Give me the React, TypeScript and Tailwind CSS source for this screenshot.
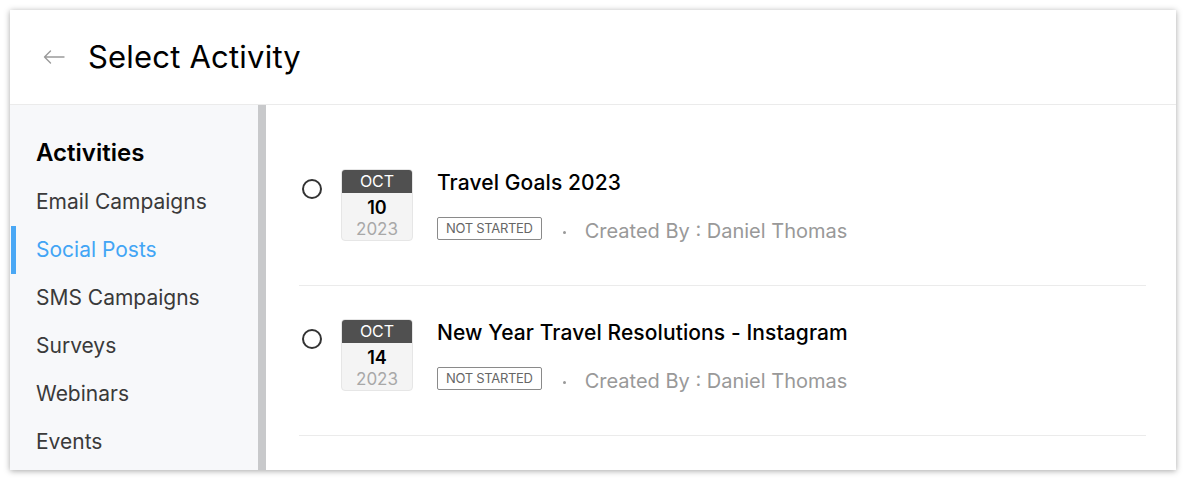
import React from "react";

const items = ["Email Campaigns", "Social Posts", "SMS Campaigns", "Surveys", "Webinars", "Events"];

const rows = [
  { month: "OCT", day: "10", year: "2023", title: "Travel Goals 2023" },
  { month: "OCT", day: "14", year: "2023", title: "New Year Travel Resolutions - Instagram" },
];

export default function App() {
  return (
    <div className="w-[1186px] h-[480px] bg-white pt-[10px] pl-[10px]" style={{ fontFamily: "Inter, 'Noto Sans', sans-serif" }}>
      <div className="w-[1166px] h-[460px] bg-white flex flex-col shadow-[0_1px_6px_rgba(0,0,0,0.35)] overflow-hidden">
        <div className="h-[95px] border-b border-[#ebebeb] flex items-center shrink-0">
          <svg className="ml-[32px]" width="24" height="16" viewBox="0 0 24 16" fill="none" stroke="#9a9a9a" strokeWidth="1.4">
            <path d="M22 8H2.5M8.5 2L2.5 8l6 6" strokeLinecap="round" strokeLinejoin="round" />
          </svg>
          <div className="ml-[22px] text-[31px] text-black leading-none tracking-[0.2px] -mt-[2px]">Select Activity</div>
        </div>
        <div className="flex flex-1 min-h-0">
          <div className="w-[248px] bg-[#f7f8fa] pt-[23px] shrink-0">
            <div className="h-[50px] flex items-center pl-[26px] text-[24px] font-semibold text-black">Activities</div>
            {items.map((it) => {
              const active = it === "Social Posts";
              return (
                <div key={it} className="h-[48px] flex items-center relative">
                  {active && <div className="absolute left-[1px] top-0 w-[5px] h-[48px] bg-[#4aa8f5]" />}
                  <span className={`pl-[26px] text-[21px] ${active ? "text-[#42a5f5]" : "text-[#3a3a3a]"}`}>{it}</span>
                </div>
              );
            })}
          </div>
          <div className="w-[8px] bg-[#c8c9cb] shrink-0" />
          <div className="flex-1 pl-[33px] pr-[30px] pt-[31px]">
            {rows.map((r) => (
              <div key={r.title} className="border-b border-[#ebebeb] pt-[33px] flex items-start h-[150px]">
                <div className="ml-[3px] mt-[10px] w-[20px] h-[20px] rounded-full border-2 border-[#333]" />
                <div className="ml-[19px] w-[72px] h-[72px] rounded-[4px] overflow-hidden border border-[#e6e6e6] bg-[#f4f4f4] flex flex-col">
                  <div className="h-[24px] bg-[#505050] text-white text-[16px] leading-[24px] text-center -mx-px -mt-px">{r.month}</div>
                  <div className="text-[18px] font-semibold text-black text-center leading-[22px] mt-[4px]">{r.day}</div>
                  <div className="text-[17px] text-[#a8a8a8] text-center leading-[20px]">{r.year}</div>
                </div>
                <div className="ml-[24px] flex flex-col">
                  <div className="text-[21px] leading-[28px] font-medium text-black tracking-[0.1px]">{r.title}</div>
                  <div className="flex items-center mt-[20px] h-[23px]">
                    <span className="h-[23px] px-[8px] border border-[#8a8a8a] rounded-[2px] text-[13px] leading-[21px] text-[#666] tracking-[-0.3px]">NOT STARTED</span>
                    <span className="ml-[21px] w-[3px] h-[3px] rounded-full bg-[#999] mt-[8px]" />
                    <span className="ml-[19px] text-[20px] leading-[24px] text-[#999] mt-[5px]">Created By : Daniel Thomas</span>
                  </div>
                </div>
              </div>
            ))}
          </div>
        </div>
      </div>
    </div>
  );
}
